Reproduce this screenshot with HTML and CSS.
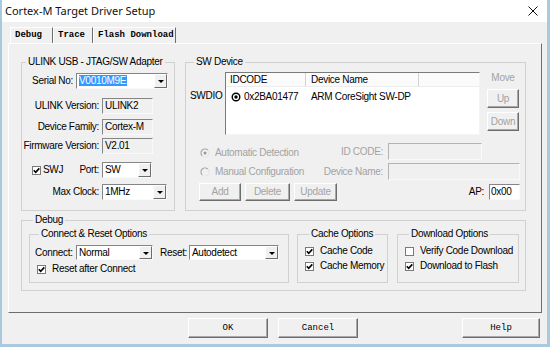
FILE: index.html
```html
<!DOCTYPE html>
<html>
<head>
<meta charset="utf-8">
<link rel="stylesheet" href="styles.css">
</head>
<body>
<svg class="defs" width="0" height="0">
  <symbol id="chk" viewBox="0 0 9 9"><rect x="0.5" y="0.5" width="8" height="8" fill="#fff" stroke="#7a7a7a"/><path d="M1.8 4.2 3.7 6.3 7.3 2.4" fill="none" stroke="#000" stroke-width="1.6"/></symbol>
  <symbol id="unchk" viewBox="0 0 9 9"><rect x="0.5" y="0.5" width="8" height="8" fill="#fff" stroke="#7a7a7a"/></symbol>
  <symbol id="radon" viewBox="0 0 10 10"><path d="M7.83 2.17A4 4 0 0 0 2.17 7.83" fill="none" stroke="#9a9a9a" stroke-width="1.1"/><path d="M7.83 2.17A4 4 0 0 1 2.17 7.83" fill="none" stroke="#e4e4e4" stroke-width="1.1"/><circle cx="5" cy="5" r="1.5" fill="#9a9a9a"/></symbol>
  <symbol id="radoff" viewBox="0 0 10 10"><path d="M7.83 2.17A4 4 0 0 0 2.17 7.83" fill="none" stroke="#9a9a9a" stroke-width="1.1"/><path d="M7.83 2.17A4 4 0 0 1 2.17 7.83" fill="none" stroke="#e4e4e4" stroke-width="1.1"/></symbol>
  <symbol id="radblk" viewBox="0 0 10 10"><circle cx="5" cy="5" r="3.8" fill="#fff" stroke="#000" stroke-width="1.4"/><circle cx="5" cy="5" r="1.7" fill="#000"/></symbol>
</svg>
<div class="window">
  <div class="titlebar">
    <span class="title">Cortex-M Target Driver Setup</span>
    <svg class="close" width="10" height="10" viewBox="0 0 10 10"><path d="M0.5 0.5 9.5 9.5M9.5 0.5 0.5 9.5" stroke="#111" stroke-width="1"/></svg>
  </div>
  <div class="client">
    <div class="tabs">
      <div class="tab tab-debug">Debug</div>
      <div class="tab tab-trace">Trace</div>
      <div class="tab tab-flash">Flash Download</div>
    </div>
    <div class="panel">
      <div class="toprow">
        <fieldset class="group ulink">
          <legend>ULINK USB - JTAG/SW Adapter</legend>
          <div class="row">
            <span class="lbl lbl-serial">Serial No:</span>
            <div class="field combo w92"><span class="ctext"><span class="sel">V0010M9E</span></span><span class="drop"><i></i></span></div>
          </div>
          <div class="row mt9">
            <span class="lbl lbl-wide">ULINK Version:</span>
            <div class="field ro w51">ULINK2</div>
          </div>
          <div class="row mt5">
            <span class="lbl lbl-wide">Device Family:</span>
            <div class="field ro w51">Cortex-M</div>
          </div>
          <div class="row mt3">
            <span class="lbl lbl-wide">Firmware Version:</span>
            <div class="field ro w51">V2.01</div>
          </div>
          <div class="row mt8">
            <div class="swjcell">
              <svg class="cb cb-tight"><use href="#chk"/></svg><span>SWJ</span>
              <span class="portlbl">Port:</span>
            </div>
            <div class="field combo w50"><span class="ctext">SW</span><span class="drop"><i></i></span></div>
          </div>
          <div class="row mt6">
            <span class="lbl lbl-wide">Max Clock:</span>
            <div class="field combo w65"><span class="ctext">1MHz</span><span class="drop"><i></i></span></div>
          </div>
        </fieldset>
        <fieldset class="group swdev">
          <legend>SW Device</legend>
          <div class="swtop">
            <span class="swdio">SWDIO</span>
            <div class="list">
              <div class="lhead">
                <span class="lc1 hc1">IDCODE</span>
                <span class="lc2">Device Name</span>
                <span class="lc3"></span>
              </div>
              <div class="lrow">
                <span class="lc1 rc1"><svg class="rad"><use href="#radblk"/></svg>0x2BA01477</span>
                <span class="lrc2">ARM CoreSight SW-DP</span>
              </div>
            </div>
            <div class="move">
              <span class="movelbl">Move</span>
              <button class="btn dis upbtn">Up</button>
              <button class="btn dis downbtn">Down</button>
            </div>
          </div>
          <div class="swline sw1">
            <div class="radrow"><svg class="rad rad-dis"><use href="#radon"/></svg>Automatic Detection</div>
            <div class="frow idrow"><span class="flbl dis-text">ID CODE:</span><div class="field disf w94"></div></div>
          </div>
          <div class="swline sw2">
            <div class="radrow"><svg class="rad rad-dis"><use href="#radoff"/></svg>Manual Configuration</div>
            <div class="frow"><span class="flbl dis-text">Device Name:</span><div class="field disf w132"></div></div>
          </div>
          <div class="swline sw3">
            <div class="btnrow">
              <button class="btn dis b-add">Add</button>
              <button class="btn dis b-del">Delete</button>
              <button class="btn dis b-upd">Update</button>
            </div>
            <div class="frow"><span class="flbl">AP:</span><div class="field wf w31">0x00</div></div>
          </div>
        </fieldset>
      </div>
      <fieldset class="group debug">
        <legend>Debug</legend>
        <div class="debugrow">
          <fieldset class="group connect">
            <legend>Connect &amp; Reset Options</legend>
            <div class="crow">
              <span class="clbl">Connect:</span>
              <div class="field combo w77"><span class="ctext">Normal</span><span class="drop"><i></i></span></div>
              <span class="rlbl">Reset:</span>
              <div class="field combo w90"><span class="ctext">Autodetect</span><span class="drop"><i></i></span></div>
            </div>
            <div class="cbrow rac"><svg class="cb"><use href="#chk"/></svg>Reset after Connect</div>
          </fieldset>
          <fieldset class="group cache">
            <legend>Cache Options</legend>
            <div class="cbrow first"><svg class="cb"><use href="#chk"/></svg>Cache Code</div>
            <div class="cbrow second"><svg class="cb"><use href="#chk"/></svg>Cache Memory</div>
          </fieldset>
          <fieldset class="group download">
            <legend>Download Options</legend>
            <div class="cbrow first"><svg class="cb"><use href="#unchk"/></svg>Verify Code Download</div>
            <div class="cbrow second"><svg class="cb"><use href="#chk"/></svg>Download to Flash</div>
          </fieldset>
        </div>
      </fieldset>
    </div>
    <div class="buttons">
      <button class="btn mono b-ok">OK</button>
      <button class="btn mono b-cancel">Cancel</button>
      <button class="btn mono b-help">Help</button>
    </div>
  </div>
</div>
</body>
</html>
```
FILE: styles.css
```css
* { box-sizing: border-box; }
html, body { margin: 0; padding: 0; }
body {
  width: 550px; height: 347px; overflow: hidden;
  background: #f0f0f0; color: #000;
  font-family: "Liberation Sans", Arial, sans-serif;
  font-size: 10px; line-height: 12px; letter-spacing: -0.3px;
}
.defs { position: absolute; width: 0; height: 0; overflow: hidden; }

.window {
  width: 550px; height: 347px;
  display: flex; flex-direction: column;
  background: #f0f0f0;
  border-left: 2px solid #a9c9de;
  border-right: 3px solid #a9c9de;
  border-bottom: 3px solid #a9c9de;
}
.titlebar {
  height: 22px; flex: none; background: #fff;
  display: flex; align-items: center;
  padding: 0 9px 0 3px;
}
.title { flex: 1; font-family: "Noto Sans", sans-serif; font-size: 11px; line-height: 14px; color: #111; letter-spacing: 0; }
.close { flex: none; display: block; }

.client { flex: 1; display: flex; flex-direction: column; padding: 5px 5px 0 6px; }

.tabs { display: flex; height: 16px; margin-left: 2px; flex: none; }
.tab {
  height: 16px; padding-left: 4px; letter-spacing: 0;
  border-top: 1px solid #fff; border-left: 1px solid #fff; border-right: 1px solid #6d6d6d;
  font-family: "Liberation Mono", monospace; font-weight: bold; font-size: 9px; line-height: 15px;
}
.tab-debug { width: 43px; }
.tab-trace { width: 40px; }
.tab-flash { width: 83px; }

.panel {
  width: 534px; height: 270px; flex: none;
  border: 1px solid; border-color: #fff #6d6d6d #6d6d6d #fff;
  padding: 12px 15px 0 12px;
}
.toprow { display: flex; gap: 10px; }

.group { margin: 0; padding: 0; min-width: 0; border: 1px solid #d0d0d0; }
.group > legend { padding: 0 2px; margin-left: 4px; line-height: 12px; height: 12px; white-space: nowrap; }

/* ULINK */
.ulink { width: 154px; flex: none; padding: 5px 0 10px 0; }
.row { display: flex; align-items: center; height: 16px; }
.mt3 { margin-top: 3px; }
.mt5 { margin-top: 5px; }
.mt6 { margin-top: 6px; }
.mt8 { margin-top: 8px; }
.mt9 { margin-top: 9px; }
.lbl { flex: none; text-align: right; margin-right: 3px; white-space: nowrap; }
.lbl-serial { width: 51px; }
.lbl-wide { width: 77px; }
.swjcell { width: 77px; margin-right: 3px; display: flex; align-items: center; padding-left: 10px; }
.portlbl { margin-left: auto; }

.field {
  height: 16px; flex: none; padding-left: 2px; line-height: 14px; white-space: nowrap; overflow: hidden;
  border: 1px solid; border-color: #858585 #fafafa #fafafa #858585;
}
.ro { background: #f0f0f0; }
.wf { background: #fff; padding-left: 1px; }
.disf { background: #f0f0f0; border-color: #b4b4b4 #fafafa #fafafa #b4b4b4; height: 17px; }
.combo { background: #fff; display: flex; padding-left: 1px; }
.ctext { flex: 1; line-height: 14px; padding-left: 1px; }
.sel { background: #3399ff; color: #fff; display: inline-block; line-height: 11px; padding: 0 1px 0 0; }
.drop {
  flex: none; width: 13px; height: 14px;
  border: 1px solid; border-color: #fff #6d6d6d #6d6d6d #fff;
  background: #f0f0f0; display: flex; align-items: center; justify-content: center;
}
.drop i { display: block; width: 0; height: 0; border-left: 3px solid transparent; border-right: 3px solid transparent; border-top: 3px solid #000; margin-top: 1px; }
.w31 { width: 31px; }
.w50 { width: 50px; }
.w51 { width: 51px; }
.w65 { width: 65px; }
.w77 { width: 77px; }
.w90 { width: 90px; }
.w92 { width: 92px; }
.w94 { width: 94px; }
.w132 { width: 132px; }

.cb { width: 9px; height: 9px; flex: none; margin-right: 6px; display: block; }
.cb-tight { margin-right: 2px; }

/* SW Device */
.swdev { flex: 1; padding: 4px 5px 9px 4px; }
.swtop { display: flex; }
.swdio { width: 35px; flex: none; padding-top: 18px; }
.list {
  width: 255px; height: 63px; flex: none; background: #fff;
  border: 1px solid; border-color: #7a7a7a #f4f4f4 #f4f4f4 #7a7a7a;
}
.lhead { display: flex; height: 14px; background: #fbfbfb; border-bottom: 1px solid #ececec; }
.lc1 { width: 80px; flex: none; border-right: 1px solid #d2d2d2; }
.lc2 { width: 113px; flex: none; border-right: 1px solid #d2d2d2; padding-left: 5px; line-height: 13px; }
.hc1 { padding-left: 4px; line-height: 13px; }
.lc3 { flex: 1; }
.lrow { display: flex; height: 14px; margin-top: 3px; align-items: center; }
.rc1 { border-right: 0; display: flex; align-items: center; padding-left: 5px; }
.lrc2 { padding-left: 5px; }
.rad { width: 10px; height: 10px; flex: none; display: block; margin-right: 3px; }
.move { width: 32px; margin-left: 7px; flex: none; display: flex; flex-direction: column; }
.movelbl { color: #a3a3a3; text-align: center; line-height: 12px; }

.btn {
  font-family: inherit; font-size: 10px; line-height: 12px; color: #000; letter-spacing: -0.3px;
  background: #f0f0f0; padding: 0; margin: 0;
  border: 1px solid; border-color: #fff #6d6d6d #6d6d6d #fff;
  box-shadow: inset -1px -1px 0 #a8a8a8;
}
.btn.dis { color: #a3a3a3; }
.upbtn { height: 19px; margin-top: 5px; }
.downbtn { height: 19px; margin-top: 4px; }

.swline { display: flex; align-items: center; justify-content: space-between; padding-left: 9px; }
.sw1 { margin-top: 8px; height: 17px; }
.sw2 { margin-top: 3px; height: 17px; }
.sw3 { margin-top: 3px; height: 18px; }
.radrow { display: flex; align-items: center; height: 17px; padding-left: 1px; color: #a3a3a3; white-space: nowrap; }
.sw1 .radrow { padding-top: 3px; }
.rad-dis { margin-right: 5px; }
.btnrow { display: flex; gap: 4px; }
.btnrow .btn { height: 18px; }
.b-add { width: 42px; }
.b-del { width: 45px; }
.b-upd { width: 43px; }
.frow { display: flex; align-items: center; height: 17px; }
.idrow { margin-right: 38px; }
.flbl { margin-right: 5px; white-space: nowrap; }
.dis-text { color: #a3a3a3; }

/* Debug */
.debug { margin-top: 3px; padding: 2px 6px 7px 7px; }
.debugrow { display: flex; }
.connect { width: 260px; flex: none; padding: 5px 0 6px 5px; }
.crow { display: flex; align-items: center; height: 15px; }
.crow .field { height: 15px; }
.crow .drop { height: 13px; }
.clbl { width: 41px; flex: none; white-space: nowrap; }
.rlbl { width: 29px; flex: none; margin-left: 7px; white-space: nowrap; }
.cbrow { display: flex; align-items: center; height: 14px; white-space: nowrap; }
.rac { margin-top: 2px; padding-left: 2px; }
.cache { width: 91px; flex: none; margin-left: 8px; padding: 4px 0 0 7px; }
.download { flex: 1; margin-left: 9px; padding: 4px 0 0 7px; }
.first { margin-top: 0; }
.second { margin-top: 1px; }

/* bottom buttons */
.buttons { display: flex; margin-top: 5px; padding-left: 180px; }
.mono { font-family: "Liberation Mono", monospace; font-size: 9px; height: 20px; letter-spacing: 0; }
.b-ok { width: 80px; }
.b-cancel { width: 80px; margin-left: 10px; }
.b-help { width: 78px; margin-left: auto; margin-right: 2px; }
```
